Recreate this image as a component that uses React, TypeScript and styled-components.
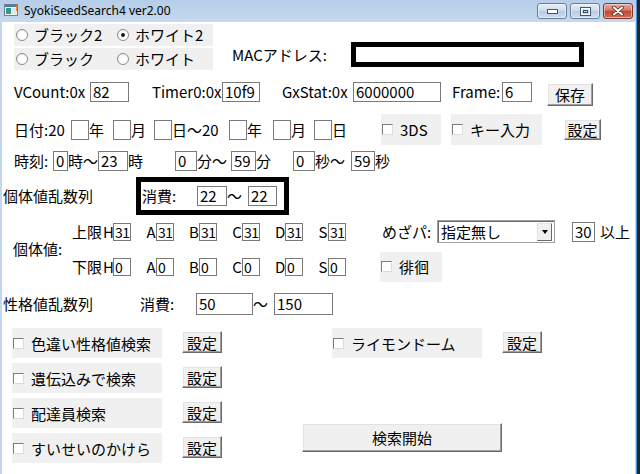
import React from "react";
import styled, { createGlobalStyle } from "styled-components";

const FONT = `"Liberation Sans Narrow", "Noto Sans CJK JP", sans-serif`;

const Global = createGlobalStyle`
  html, body { margin: 0; padding: 0; }
  body {
    width: 640px;
    height: 474px;
    overflow: hidden;
    background: #1d2733;
    font-family: ${FONT};
    color: #000;
  }
`;

const Desktop = styled.div`
  width: 640px;
  height: 474px;
  display: flex;
  background: #1d2733;
`;

const Window = styled.div`
  width: 637px;
  height: 474px;
  display: flex;
  flex-direction: column;
  background: #c3d8ee;
  border-right: 1px solid #4f93d6;
  box-sizing: border-box;
`;

const TitleBar = styled.div`
  height: 22px;
  flex: none;
  display: flex;
  align-items: flex-start;
  background: linear-gradient(to bottom, #b5cde8, #c5d9ef);
`;

const AppIcon = styled.svg`
  margin: 4px 0 0 4px;
  flex: none;
`;

const Title = styled.span`
  margin-left: 6px;
  margin-top: 3px;
  font-family: "Noto Sans", sans-serif;
  font-size: 12px;
  line-height: 15px;
  color: #000;
  white-space: nowrap;
`;

const Caption = styled.div`
  margin-left: auto;
  margin-right: 3px;
  margin-top: 3px;
  display: flex;
  gap: 3px;
`;

const CapButton = styled.div<{ $close?: boolean }>`
  width: 30px;
  height: 16px;
  box-sizing: border-box;
  border-radius: 3px;
  border: 1px solid ${(p) => (p.$close ? "#7a3a33" : "#6c7f99")};
  background: ${(p) =>
    p.$close
      ? "linear-gradient(to bottom, #e9a99a, #d67a66 45%, #c2452f 50%, #d2705a)"
      : "linear-gradient(to bottom, #e6eef8, #cfdeef 45%, #b8cce4 50%, #cadcf0)"};
  display: flex;
  align-items: center;
  justify-content: center;
  box-shadow: inset 0 0 0 1px rgba(255, 255, 255, 0.45);
`;

const Client = styled.div`
  flex: 1;
  margin-left: 2px;
  margin-right: 1px;
  background: #fff;
  display: flex;
  flex-direction: column;
  font-size: 15px;
`;

const TopSection = styled.div`
  display: flex;
  margin-top: 2px;
`;

const RadioGroup = styled.div`
  margin-left: 12px;
  display: flex;
  flex-direction: column;
  gap: 2px;
`;

const RadioRow = styled.div`
  width: 199px;
  height: 22px;
  background: #f0f0f0;
  display: flex;
  align-items: center;
`;

const RadioItem = styled.div<{ $w: number }>`
  width: ${(p) => p.$w}px;
  display: flex;
  align-items: center;
  flex: none;
`;

const RadioDot = styled.span<{ $on?: boolean }>`
  width: 12px;
  height: 12px;
  margin-left: 2px;
  box-sizing: border-box;
  border-radius: 50%;
  border: 1px solid #8b8b8b;
  background: radial-gradient(circle at 60% 60%, #ffffff 40%, #e2e2e2 100%);
  display: flex;
  align-items: center;
  justify-content: center;
  flex: none;
  &::after {
    content: "";
    display: ${(p) => (p.$on ? "block" : "none")};
    width: 4px;
    height: 4px;
    border-radius: 50%;
    background: #1a1a1a;
  }
`;

const RadioText = styled.span`
  margin-left: 6px;
  white-space: nowrap;
  line-height: 20px;
`;

const MacArea = styled.div`
  margin-left: 19px;
  margin-top: 18px;
  height: 25px;
  display: flex;
  align-items: center;
`;

const MacBox = styled.div`
  width: 233px;
  height: 25px;
  box-sizing: border-box;
  border: 5px solid #000;
  background: #fff;
`;

const Row = styled.div<{ $mt: number; $h: number }>`
  display: flex;
  align-items: center;
  margin-top: ${(p) => p.$mt}px;
  height: ${(p) => p.$h}px;
  flex: none;
`;

const Text = styled.span<{ $w?: number; $ml?: number }>`
  flex: none;
  ${(p) => (p.$w ? `width: ${p.$w}px;` : "")}
  margin-left: ${(p) => p.$ml ?? 0}px;
  white-space: nowrap;
  line-height: 20px;
  font-size: 15px;
`;

const Input = styled.div<{ $w: number; $h?: number; $ml?: number }>`
  flex: none;
  box-sizing: border-box;
  width: ${(p) => p.$w}px;
  height: ${(p) => p.$h ?? 20}px;
  margin-left: ${(p) => p.$ml ?? 0}px;
  border: 1px solid #7a7a7a;
  background: #fff;
  padding-left: 2px;
  font-size: 15px;
  line-height: ${(p) => (p.$h ?? 20) - 2}px;
  white-space: nowrap;
  overflow: hidden;
`;

const StatBox = styled(Input)`
  padding-left: 1px;
  font-size: 14px;
  letter-spacing: -0.6px;
`;

const Button = styled.div<{ $w: number; $h: number; $ml?: number; $mt?: number }>`
  flex: none;
  box-sizing: border-box;
  width: ${(p) => p.$w}px;
  height: ${(p) => p.$h}px;
  margin-left: ${(p) => p.$ml ?? 0}px;
  margin-top: ${(p) => p.$mt ?? 0}px;
  background: #f0f0f0;
  border: 1px solid;
  border-color: #ffffff #696969 #696969 #ffffff;
  box-shadow: inset -1px -1px 0 #a0a0a0, inset 1px 1px 0 #e3e3e3;
  display: flex;
  align-items: center;
  justify-content: center;
  font-size: 15px;
  white-space: nowrap;
`;

const CheckField = styled.div<{ $w: number; $h?: number; $ml?: number }>`
  flex: none;
  width: ${(p) => p.$w}px;
  height: ${(p) => p.$h ?? 30}px;
  margin-left: ${(p) => p.$ml ?? 0}px;
  background: #f0f0f0;
  display: flex;
  align-items: center;
`;

const CheckBox = styled.span`
  flex: none;
  width: 11px;
  height: 11px;
  margin-left: 1px;
  box-sizing: border-box;
  border: 1px solid;
  border-color: #7d7d7d #dcdcdc #dcdcdc #7d7d7d;
  background: #fff;
`;

const CheckText = styled.span`
  margin-left: 7px;
  white-space: nowrap;
  font-size: 15px;
`;

const ConsumeBox = styled.div`
  flex: none;
  width: 153px;
  height: 38px;
  box-sizing: border-box;
  border: 5px solid #000;
  display: flex;
  align-items: center;
`;

const IVSection = styled.div`
  display: flex;
  align-items: center;
  margin-top: 5px;
  flex: none;
`;

const IVRows = styled.div`
  display: flex;
  flex-direction: column;
  gap: 12px;
`;

const IVRow = styled.div`
  display: flex;
  align-items: center;
  height: 23px;
`;

const StatGroup = styled.div`
  display: flex;
  align-items: center;
  margin-right: 15px;
  flex: none;
`;

const StatLetter = styled.span`
  width: 10px;
  font-size: 15px;
  line-height: 18px;
  text-align: center;
`;

const Select = styled.div`
  flex: none;
  width: 118px;
  height: 23px;
  box-sizing: border-box;
  border: 1px solid #a0a0a0;
  box-shadow: inset 1px 1px 0 #696969;
  background: #fff;
  display: flex;
  align-items: center;
  padding-left: 3px;
  font-size: 15px;
`;

const SelectArrow = styled.span`
  margin-left: auto;
  margin-right: 2px;
  width: 15px;
  height: 18px;
  box-sizing: border-box;
  background: #f0f0f0;
  border: 1px solid;
  border-color: #e3e3e3 #696969 #696969 #e3e3e3;
  display: flex;
  align-items: center;
  justify-content: center;
  &::after {
    content: "";
    border-left: 3.5px solid transparent;
    border-right: 3.5px solid transparent;
    border-top: 4px solid #000;
  }
`;

const Bottom = styled.div`
  display: flex;
  margin-top: 13px;
`;

const LeftColumn = styled.div`
  margin-left: 10px;
  display: flex;
  flex-direction: column;
  gap: 5px;
`;

const OptionRow = styled.div`
  display: flex;
  align-items: flex-start;
  height: 30px;
`;

const RightColumn = styled.div`
  margin-left: 80px;
  display: flex;
  flex-direction: column;
`;

const CloseIcon = () => (
  <svg width="14" height="10" viewBox="0 0 14 10">
    <path d="M3 1.5 L11 8.5 M11 1.5 L3 8.5" stroke="#5a2a22" strokeWidth="3.6" strokeLinecap="round" />
    <path d="M3 1.5 L11 8.5 M11 1.5 L3 8.5" stroke="#ffffff" strokeWidth="2" strokeLinecap="round" />
  </svg>
);

const stats = ["H", "A", "B", "C", "D", "S"];

export default function App() {
  return (
    <>
      <Global />
      <Desktop>
        <Window>
          <TitleBar>
            <AppIcon width="14" height="12" viewBox="0 0 14 12">
              <rect x="0.5" y="0.5" width="13" height="11" fill="#f4f6f8" stroke="#6f7f8e" />
              <rect x="1" y="1" width="12" height="2" fill="#3f7fb8" />
              <rect x="2" y="4" width="5" height="6" fill="#2b9d8a" />
              <rect x="8" y="4" width="4" height="6" fill="#dfe6ec" />
              <rect x="12" y="2" width="1" height="5" fill="#ff8a2a" />
            </AppIcon>
            <Title>SyokiSeedSearch4 ver2.00</Title>
            <Caption>
              <CapButton>
                <svg width="11" height="5" viewBox="0 0 11 5">
                  <rect x="0.5" y="0.5" width="10" height="4" fill="#fff" stroke="#44556b" />
                </svg>
              </CapButton>
              <CapButton>
                <svg width="11" height="9" viewBox="0 0 11 9">
                  <rect x="0.5" y="0.5" width="10" height="8" fill="none" stroke="#44556b" />
                  <rect x="1.5" y="1.5" width="8" height="6" fill="none" stroke="#fff" />
                  <rect x="3.5" y="3.5" width="4" height="2" fill="none" stroke="#44556b" />
                </svg>
              </CapButton>
              <CapButton $close>
                <CloseIcon />
              </CapButton>
            </Caption>
          </TitleBar>
          <Client>
            <TopSection>
              <RadioGroup>
                <RadioRow>
                  <RadioItem $w={101}>
                    <RadioDot />
                    <RadioText>ブラック2</RadioText>
                  </RadioItem>
                  <RadioItem $w={98}>
                    <RadioDot $on />
                    <RadioText>ホワイト2</RadioText>
                  </RadioItem>
                </RadioRow>
                <RadioRow>
                  <RadioItem $w={101}>
                    <RadioDot />
                    <RadioText>ブラック</RadioText>
                  </RadioItem>
                  <RadioItem $w={98}>
                    <RadioDot />
                    <RadioText>ホワイト</RadioText>
                  </RadioItem>
                </RadioRow>
              </RadioGroup>
              <MacArea>
                <Text $w={119}>MACアドレス:</Text>
                <MacBox />
              </MacArea>
            </TopSection>

            <Row $mt={12} $h={20}>
              <Text $ml={12} $w={76}>VCount:0x</Text>
              <Input $w={39}>82</Input>
              <Text $ml={23} $w={70}>Timer0:0x</Text>
              <Input $w={38}>10f9</Input>
              <Text $ml={22} $w={71}>GxStat:0x</Text>
              <Input $w={88}>6000000</Input>
              <Text $ml={11} $w={50}>Frame:</Text>
              <Input $w={30}>6</Input>
              <Button $ml={15} $w={46} $h={23} $mt={5}>保存</Button>
            </Row>

            <Row $mt={12} $h={31}>
              <Text $ml={12} $w={57}>日付:20</Text>
              <Input $w={18} />
              <Text $w={24}>年</Text>
              <Input $w={18} />
              <Text $w={23}>月</Text>
              <Input $w={18} />
              <Text $w={57}>日～20</Text>
              <Input $w={18} />
              <Text $w={26}>年</Text>
              <Input $w={18} />
              <Text $w={23}>月</Text>
              <Input $w={18} />
              <Text $w={18}>日</Text>
              <CheckField $w={60} $h={31} $ml={31}>
                <CheckBox />
                <CheckText>3DS</CheckText>
              </CheckField>
              <CheckField $w={91} $h={31} $ml={10}>
                <CheckBox />
                <CheckText>キー入力</CheckText>
              </CheckField>
              <Button $ml={22} $w={37} $h={21}>設定</Button>
            </Row>

            <Row $mt={6} $h={20}>
              <Text $ml={12} $w={39}>時刻:</Text>
              <Input $w={15}>0</Input>
              <Text $w={30}>時～</Text>
              <Input $w={30}>23</Input>
              <Text $w={47}>時</Text>
              <Input $w={22}>0</Input>
              <Text $w={34}>分～</Text>
              <Input $w={25}>59</Input>
              <Text $w={37}>分</Text>
              <Input $w={22}>0</Input>
              <Text $w={36}>秒～</Text>
              <Input $w={24}>59</Input>
              <Text>秒</Text>
            </Row>

            <Row $mt={6} $h={38}>
              <Text $ml={1} $w={133}>個体値乱数列</Text>
              <ConsumeBox>
                <Text $ml={1} $w={55}>消費:</Text>
                <Input $w={30}>22</Input>
                <Text $w={21}>～</Text>
                <Input $w={29}>22</Input>
              </ConsumeBox>
            </Row>

            <IVSection>
              <Text $ml={11} $w={59}>個体値:</Text>
              <IVRows>
                <IVRow>
                  <Text $w={31}>上限</Text>
                  {stats.map((s) => (
                    <StatGroup key={s}>
                      <StatLetter>{s}</StatLetter>
                      <StatBox $w={18} $h={18}>31</StatBox>
                    </StatGroup>
                  ))}
                  <Text $ml={21} $w={55}>めざパ:</Text>
                  <Select>
                    指定無し
                    <SelectArrow />
                  </Select>
                  <Input $w={23} $ml={17}>30</Input>
                  <Text $ml={5}>以上</Text>
                </IVRow>
                <IVRow>
                  <Text $w={31}>下限</Text>
                  {stats.map((s) => (
                    <StatGroup key={s}>
                      <StatLetter>{s}</StatLetter>
                      <StatBox $w={18} $h={18}>0</StatBox>
                    </StatGroup>
                  ))}
                  <CheckField $w={62} $h={30} $ml={19}>
                    <CheckBox />
                    <CheckText>徘徊</CheckText>
                  </CheckField>
                </IVRow>
              </IVRows>
            </IVSection>

            <Row $mt={15} $h={22}>
              <Text $ml={1} $w={137}>性格値乱数列</Text>
              <Text $w={56}>消費:</Text>
              <Input $w={57} $h={22}>50</Input>
              <Text $w={21}>～</Text>
              <Input $w={59} $h={22}>150</Input>
            </Row>

            <Bottom>
              <LeftColumn>
                {["色違い性格値検索", "遺伝込みで検索", "配達員検索", "すいせいのかけら"].map((t) => (
                  <OptionRow key={t}>
                    <CheckField $w={150}>
                      <CheckBox />
                      <CheckText>{t}</CheckText>
                    </CheckField>
                    <Button $ml={20} $w={40} $h={22} $mt={3}>設定</Button>
                  </OptionRow>
                ))}
              </LeftColumn>
              <RightColumn>
                <OptionRow>
                  <CheckField $w={150} $ml={30}>
                    <CheckBox />
                    <CheckText>ライモンドーム</CheckText>
                  </CheckField>
                  <Button $ml={20} $w={40} $h={22} $mt={3}>設定</Button>
                </OptionRow>
                <Button $w={200} $h={29} $mt={65}>検索開始</Button>
              </RightColumn>
            </Bottom>
          </Client>
        </Window>
      </Desktop>
    </>
  );
}
